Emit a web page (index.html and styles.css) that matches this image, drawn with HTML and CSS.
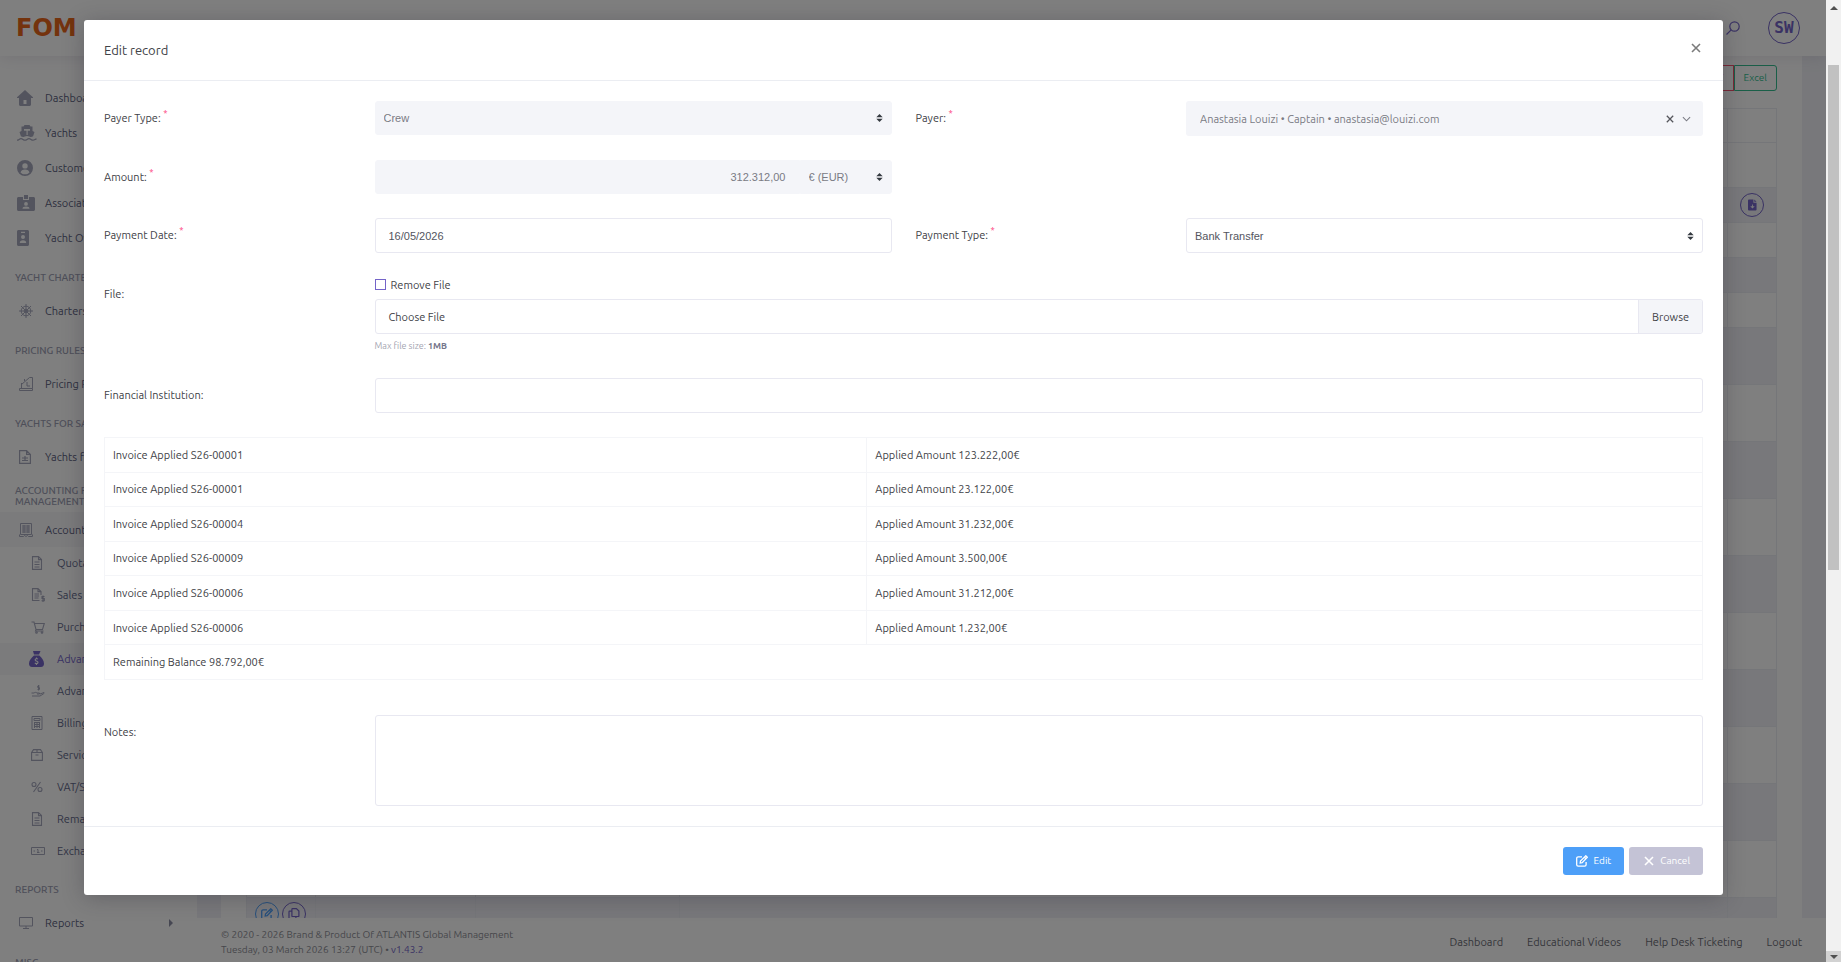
FILE: index.html
```html
<!DOCTYPE html>
<html lang="en">
<head>
    <meta charset="UTF-8">
    <meta name="viewport" content="width=device-width, initial-scale=1.0">
    <link rel="stylesheet" href="styles.css">

    <title>Edit record</title>
</head>
<body>
    <!-- icons -->
    <svg class="sprite" aria-hidden="true">
        <symbol id="i-home" viewBox="0 0 16 16"><path fill="currentColor" fill-rule="evenodd" d="M8 0 0 7.2V8h2v6.5c0 .8.7 1.5 1.5 1.5h9c.8 0 1.5-.7 1.5-1.500V8h2v-.8L14 5.400 8 0zM6.500 10h3v4h-3z"/></symbol>
        <symbol id="i-ship" viewBox="0 0 20 16"><path fill="currentColor" fill-rule="evenodd" d="M7.500 0h5l1 1.500h2V6l2 1-1.500 4.500c-1 0-1.500.5-2.500.5s-1.500-1-3.500-1-2.500 1-3.500 1-1.500-.5-2.500-.5L2.500 7l2-1V1.500h2zM7 4v1.800h2.500V10h1.200V5.800H13V4z"/><path fill="none" stroke="currentColor" stroke-width="1.300" d="M0 15.200c2 0 2.200-1.500 4-1.500s2.200 1.500 4 1.500 2.200-1.500 4-1.500 2.200 1.500 4 1.500 2-1.200 3.500-1.200"/></symbol>
        <symbol id="i-user" viewBox="0 0 16 16"><path fill="currentColor" fill-rule="evenodd" d="M8 0a8 8 0 1 0 0 16A8 8 0 0 0 8 0zm0 3.200a2.700 2.700 0 1 1 0 5.400 2.700 2.700 0 0 1 0-5.400zM3.500 12.500c.5-2 2-3 4.500-3s4 1 4.500 3C11.300 13.800 9.800 14.300 8 14.300s-3.300-.5-4.500-1.800z"/></symbol>
        <symbol id="i-badge" viewBox="0 0 18 16"><path fill="currentColor" fill-rule="evenodd" d="M7 0h4v4H7zM1.500 2H6v3h6V2h4.500c.8 0 1.500.7 1.500 1.500v11c0 .8-.7 1.500-1.500 1.500h-15C.7 16 0 15.300 0 14.500v-11C0 2.700.7 2 1.500 2zM9 7a1.900 1.900 0 1 0 0 3.800A1.900 1.900 0 0 0 9 7zm-3.500 6.800h7c0-1.500-1.200-2.300-3.500-2.300s-3.500.8-3.500 2.300z"/></symbol>
        <symbol id="i-card" viewBox="0 0 12 16"><path fill="currentColor" fill-rule="evenodd" d="M1.500 0h9c.8 0 1.500.7 1.500 1.500v13c0 .8-.7 1.500-1.500 1.500h-9C.7 16 0 15.300 0 14.500v-13C0 .7.700 0 1.500 0zM4 1.800v1.200h4V1.800zM6 5a2 2 0 1 0 0 4 2 2 0 0 0 0-4zm-3.200 8h6.400c0-1.800-1-2.700-3.200-2.700S2.800 11.200 2.800 13z"/></symbol>
        <symbol id="i-wheel" viewBox="0 0 14 14"><g fill="none" stroke="currentColor"><circle cx="7" cy="7" r="4.800"/><circle cx="7" cy="7" r="1.800"/><path d="M7 0v14M0 7h14M2 2l10 10M12 2 2 12"/></g></symbol>
        <symbol id="i-chart" viewBox="0 0 14 14"><path fill="none" stroke="currentColor" d="M.5 11.500h13v2H.5zM13.500 11.500V.5h-3l-8 7M2.500 11.500V6M5.500 4v-2M8 5v4h3"/></symbol>
        <symbol id="i-list" viewBox="0 0 12 14"><path fill="none" stroke="currentColor" stroke-width="1.200" d="M.6.6h7l3.800 3.800v9H.6zM7.600.6v3.800h3.800M3 8h6M3 10.500h6M6 6v5"/></symbol>
        <symbol id="i-book" viewBox="0 0 14 14"><path fill="none" stroke="currentColor" d="M1.500.5h11v11h-11zM.5 13.500h4l1-1 1.500 1 1.500-1 1 1h4M.5 11.500v2m13-2v2M3 3h8M3 5h8M3 7h8M3 9h8M5 2v8m4-8v8"/></symbol>
        <symbol id="i-file" viewBox="0 0 12 14"><path fill="none" stroke="currentColor" stroke-width="1.100" d="M1.500.6h6l3 3v9.800h-9zM7.500.6v3h3M3.500 6h5M3.500 8.500h5M3.500 11h5"/></symbol>
        <symbol id="i-sales" viewBox="0 0 14 14"><path fill="none" stroke="currentColor" stroke-width="1.100" d="M8.500 12.500h-7V.6h5.500l3 3V7M7 .6v3h3M3.500 6h4.500M3.500 8h4.500M3.500 10h4M13.500 8.500h-2.500v2h2.300v2.300H10.500M12 7.500v6.500"/></symbol>
        <symbol id="i-cart" viewBox="0 0 14 14"><g fill="none" stroke="currentColor" stroke-width="1.100"><path d="M.5 2h2.500l2 7.500h6.500L13.300 3.500H3.500M5 9.500 4.500 11h8"/><circle cx="5.500" cy="12.500" r=".8"/><circle cx="11" cy="12.500" r=".8"/></g></symbol>
        <symbol id="i-bag" viewBox="0 0 15 16"><path fill="currentColor" fill-rule="evenodd" d="M4 0h7.500L10 3.500H5zM5 4.500h5.300c2.500 2 4.700 5 4.700 8 0 2.200-1 3.500-3 3.500H3c-2 0-3-1.300-3-3.500 0-3 2.500-6 5-8zM7 6.500v.8c-1.500.3-2 2.300-.5 3l1.500.7c.8.500.2 1.100-.5 1.100-.600 0-1-.2-1.500-.5l-.4 1.200c.4.200.9.400 1.400.4v.8h1v-.8c1.700-.3 2.200-2.500.6-3.300L7 9.200c-.5-.4-.1-.9.500-.9.500 0 .900.1 1.300.3l.4-1.100L8 7.200v-.7z"/></symbol>
        <symbol id="i-hand" viewBox="0 0 14 14"><path fill="none" stroke="currentColor" d="M8.500 2H6.800v1.600h1.700v1.800H6.500M7.600 1v5.500M.5 9h2.500c1-.8 2-.8 3 0h2.500v1H6M9 10l4-1.500c.6.300 0 1-.5 1.300L9 12H1"/></symbol>
        <symbol id="i-calc" viewBox="0 0 12 14"><path fill="none" stroke="currentColor" d="M1 .5h10v13H1zM3 2.500h6v2H3zM3 6.500h6M3 8.500h6M3 10.500h6M3.500 6v6M6 6v6M8.500 6v6"/></symbol>
        <symbol id="i-box" viewBox="0 0 12 12"><path fill="none" stroke="currentColor" stroke-width="1.100" d="M.6 3.500h10.800v7.900H.6zM.6 3.500 2.500.6h7l1.900 2.900M6 .6v2.900M4.500 6h3"/></symbol>
        <symbol id="i-percent" viewBox="0 0 12 12"><g fill="none" stroke="currentColor" stroke-width="1.100"><circle cx="3" cy="3.500" r="2"/><circle cx="9" cy="8.500" r="2"/><path d="M9.500 1l-7 10"/></g></symbol>
        <symbol id="i-money" viewBox="0 0 14 10"><path fill="none" stroke="currentColor" d="M.5 1.500h13v7H.5zM6 3.500h1v3M6 6.500h2.500M2.500 5h1.500M10 5h1.500"/></symbol>
        <symbol id="i-screen" viewBox="0 0 14 12"><path fill="none" stroke="currentColor" d="M.5.5h13v8.500H.5zM4 11.500h6M7 9v2.500"/></symbol>
        <symbol id="i-search" viewBox="0 0 14 14"><g fill="none" stroke="currentColor" stroke-width="1.200"><circle cx="8.500" cy="5.500" r="4.700"/><path d="M5.200 8.800.5 13.500"/></g></symbol>
        <symbol id="i-edit" viewBox="0 0 12 12"><g fill="none" stroke="currentColor" stroke-width="1.300"><path d="M6 1.800H2.200C1.300 1.800.7 2.400.7 3.200v6.600c0 .8.6 1.400 1.500 1.400h6.500c.8 0 1.400-.6 1.400-1.400V7"/><path d="M4.200 8 4.500 6 9.800.8l1.500 1.500L6.200 7.600zM8.500 2.200 10 3.700"/></g></symbol>
        <symbol id="i-copy" viewBox="0 0 12 12"><path fill="none" stroke="currentColor" stroke-width="1.200" d="M4.500.6h3.900l2.500 2.500v4.800c0 .4-.2.600-.6.600H4.500c-.4 0-.6-.2-.6-.6V1.200c0-.4.200-.6.600-.6zM3.900 3.200H1.600c-.4 0-.6.200-.6.600v7c0 .4.200.6.600.6h5.700c.4 0 .6-.2.6-.6V8.500"/></symbol>
        <symbol id="i-download" viewBox="0 0 10 12"><path fill="currentColor" fill-rule="evenodd" d="M1 0h5v3.500h3.500V11c0 .6-.4 1-1 1H1c-.6 0-1-.4-1-1V1c0-.6.4-1 1-1zM7 0l2.500 2.500H7zM4.500 5.500v2h-2L5 10l2.500-2.500h-2v-2z"/></symbol>
        <symbol id="i-close" viewBox="0 0 10 10"><path fill="none" stroke="currentColor" stroke-width="1.600" d="M1 1l8 8M9 1 1 9"/></symbol>
        <symbol id="i-down" viewBox="0 0 10 6"><path fill="none" stroke="currentColor" stroke-width="1.200" d="M1 1l4 4 4-4"/></symbol>
    </svg>

    <div class="screen">
        <div class="page">
            <header class="topbar">
                <a href="#" class="logo">FOM</a>
                <div class="topbar-tools">
                    <button type="button" class="search" aria-label="Search"><svg><use href="#i-search"/></svg></button>
                    <a href="#" class="avatar">SW</a>
                </div>
            </header>

            <div class="layout">
                <!-- sidebar -->
                <nav class="sidebar">
                    <a href="#" class="item"><span class="icon"><svg width="16" height="16"><use href="#i-home"/></svg></span>Dashboard</a>
                    <a href="#" class="item"><span class="icon"><svg width="20" height="16"><use href="#i-ship"/></svg></span>Yachts</a>
                    <a href="#" class="item"><span class="icon"><svg width="16" height="16"><use href="#i-user"/></svg></span>Customers</a>
                    <a href="#" class="item"><span class="icon"><svg width="18" height="16"><use href="#i-badge"/></svg></span>Associates</a>
                    <a href="#" class="item"><span class="icon"><svg width="12" height="16"><use href="#i-card"/></svg></span>Yacht Owners</a>
                    <h4 class="section">Yacht Charter</h4>
                    <a href="#" class="item"><span class="icon line"><svg width="14" height="14"><use href="#i-wheel"/></svg></span>Charters</a>
                    <h4 class="section">Pricing Rules</h4>
                    <a href="#" class="item"><span class="icon line"><svg width="14" height="14"><use href="#i-chart"/></svg></span>Pricing Rules</a>
                    <h4 class="section">Yachts For Sale</h4>
                    <a href="#" class="item"><span class="icon line"><svg width="12" height="14"><use href="#i-list"/></svg></span>Yachts for Sale</a>
                    <h4 class="section">Accounting File<br>Management</h4>
                    <a href="#" class="item open"><span class="icon line"><svg width="14" height="14"><use href="#i-book"/></svg></span>Accounting</a>
                    <div class="submenu">
                        <a href="#" class="subitem"><span class="icon"><svg width="12" height="14"><use href="#i-file"/></svg></span>Quotations</a>
                        <a href="#" class="subitem"><span class="icon"><svg width="14" height="14"><use href="#i-sales"/></svg></span>Sales</a>
                        <a href="#" class="subitem"><span class="icon"><svg width="14" height="14"><use href="#i-cart"/></svg></span>Purchases</a>
                        <a href="#" class="subitem active"><span class="icon"><svg width="15" height="16"><use href="#i-bag"/></svg></span>Advances</a>
                        <a href="#" class="subitem"><span class="icon"><svg width="14" height="14"><use href="#i-hand"/></svg></span>Advances</a>
                        <a href="#" class="subitem"><span class="icon"><svg width="12" height="14"><use href="#i-calc"/></svg></span>Billing</a>
                        <a href="#" class="subitem"><span class="icon"><svg width="12" height="12"><use href="#i-box"/></svg></span>Services</a>
                        <a href="#" class="subitem"><span class="icon"><svg width="12" height="12"><use href="#i-percent"/></svg></span>VAT/Sales</a>
                        <a href="#" class="subitem"><span class="icon"><svg width="12" height="14"><use href="#i-file"/></svg></span>Remarks</a>
                        <a href="#" class="subitem"><span class="icon"><svg width="14" height="10"><use href="#i-money"/></svg></span>Exchange</a>
                    </div>
                    <h4 class="section">Reports</h4>
                    <a href="#" class="item"><span class="icon line"><svg width="14" height="12"><use href="#i-screen"/></svg></span>Reports<span class="caret"></span></a>
                    <h4 class="section">Misc</h4>
                </nav>

                <main class="main">
                    <div class="content">
                        <div class="card">
                            <div class="exports">
                                <button type="button" class="export pdf">PDF</button><button type="button" class="export excel">Excel</button>
                            </div>
                            <table class="records">
                                <colgroup><col class="c-actions"><col class="c-code"><col class="c-name"><col><col class="c-file"></colgroup>
                                <tbody>
                                    <tr class="head"><td></td><td></td><td></td><td></td><td></td></tr>
                                    <tr class="filters"><td></td><td></td><td></td><td></td><td></td></tr>
                                    <tr><td></td><td></td><td></td><td></td><td class="end"><button type="button" class="round" aria-label="Download"><svg width="9" height="12"><use href="#i-download"/></svg></button></td></tr>
                                    <tr><td></td><td></td><td></td><td></td><td></td></tr>
                                    <tr><td></td><td></td><td></td><td></td><td></td></tr>
                                    <tr><td></td><td></td><td></td><td></td><td></td></tr>
                                    <tr class="tall"><td></td><td></td><td></td><td></td><td></td></tr>
                                    <tr class="tall"><td></td><td></td><td></td><td></td><td></td></tr>
                                    <tr class="tall"><td></td><td></td><td></td><td></td><td></td></tr>
                                    <tr class="tall"><td></td><td></td><td></td><td></td><td></td></tr>
                                    <tr class="tall"><td></td><td></td><td></td><td></td><td></td></tr>
                                    <tr class="tall"><td></td><td></td><td></td><td></td><td></td></tr>
                                    <tr class="tall"><td></td><td></td><td></td><td></td><td></td></tr>
                                    <tr class="tall"><td></td><td></td><td></td><td></td><td></td></tr>
                                    <tr class="tall"><td></td><td></td><td></td><td></td><td></td></tr>
                                    <tr class="tall"><td></td><td></td><td></td><td></td><td></td></tr>
                                    <tr class="tall">
                                        <td class="actions">
                                            <div class="rounds">
                                                <button type="button" class="round blue" aria-label="Edit"><svg width="12" height="12"><use href="#i-edit"/></svg></button>
                                                <button type="button" class="round" aria-label="Copy"><svg width="12" height="12"><use href="#i-copy"/></svg></button>
                                            </div>
                                        </td><td></td><td></td><td></td><td></td>
                                    </tr>
                                </tbody>
                            </table>
                        </div>
                    </div>
                    <footer class="footer">
                        <p>&copy; 2020 - 2026 Brand &amp; Product Of ATLANTIS Global Management<br>Tuesday, 03 March 2026 13:27 (UTC) &bull; <a href="#" class="version">v1.43.2</a></p>
                        <div class="footer-links">
                            <a href="#">Dashboard</a>
                            <a href="#">Educational Videos</a>
                            <a href="#">Help Desk Ticketing</a>
                            <a href="#">Logout</a>
                        </div>
                    </footer>
                </main>
            </div>

            <!-- modal -->
            <div class="backdrop">
                <form class="modal" role="dialog" aria-labelledby="modal-title">
                    <div class="modal-header">
                        <h5 id="modal-title">Edit record</h5>
                        <button type="button" class="close" aria-label="Close"><svg width="10" height="10"><use href="#i-close"/></svg></button>
                    </div>

                    <div class="modal-body">
                        <div class="row">
                            <label for="payer-type">Payer Type: <sup>*</sup></label>
                            <div class="field"><select id="payer-type" class="control" disabled><option>Crew</option></select></div>
                            <label for="payer">Payer: <sup>*</sup></label>
                            <div class="field">
                                <div class="picker">
                                    <select id="payer" disabled><option>Anastasia Louizi • Captain • anastasia@louizi.com</option></select>
                                    <button type="button" aria-label="Clear"><svg width="8" height="8"><use href="#i-close"/></svg></button>
                                    <svg width="9" height="6"><use href="#i-down"/></svg>
                                </div>
                            </div>
                        </div>

                        <div class="row">
                            <label for="amount">Amount: <sup>*</sup></label>
                            <div class="field group">
                                <input type="text" id="amount" class="control amount" value="312.312,00" disabled>
                                <select class="control currency" aria-label="Currency" disabled><option>€ (EUR)</option></select>
                            </div>
                        </div>

                        <div class="row">
                            <label for="date">Payment Date: <sup>*</sup></label>
                            <div class="field"><input type="text" id="date" class="control" value="16/05/2026"></div>
                            <label for="payment-type">Payment Type: <sup>*</sup></label>
                            <div class="field"><select id="payment-type" class="control"><option>Bank Transfer</option></select></div>
                        </div>

                        <div class="row">
                            <label for="file">File:</label>
                            <div class="field wide">
                                <div class="check">
                                    <input type="checkbox" id="remove-file">
                                    <label for="remove-file">Remove File</label>
                                </div>
                                <div class="file">
                                    <input type="file" id="file">
                                    <span class="file-name">Choose File</span>
                                    <span class="file-browse">Browse</span>
                                </div>
                                <small class="hint">Max file size: <b>1MB</b></small>
                            </div>
                        </div>

                        <div class="row">
                            <label for="institution">Financial Institution:</label>
                            <div class="field wide"><input type="text" id="institution" class="control"></div>
                        </div>

                        <table class="invoices">
                            <tbody>
                                <tr><td class="first">Invoice Applied S26-00001</td><td>Applied Amount 123.222,00€</td></tr>
                                <tr><td>Invoice Applied S26-00001</td><td>Applied Amount 23.122,00€</td></tr>
                                <tr><td>Invoice Applied S26-00004</td><td>Applied Amount 31.232,00€</td></tr>
                                <tr><td>Invoice Applied S26-00009</td><td>Applied Amount 3.500,00€</td></tr>
                                <tr><td>Invoice Applied S26-00006</td><td>Applied Amount 31.212,00€</td></tr>
                                <tr><td>Invoice Applied S26-00006</td><td>Applied Amount 1.232,00€</td></tr>
                                <tr><td colspan="2">Remaining Balance 98.792,00€</td></tr>
                            </tbody>
                        </table>

                        <div class="row">
                            <label for="notes">Notes:</label>
                            <div class="field wide"><textarea id="notes" class="control"></textarea></div>
                        </div>
                    </div>

                    <div class="modal-footer">
                        <button type="submit" class="btn btn-edit"><svg width="12" height="12"><use href="#i-edit"/></svg>Edit</button>
                        <button type="button" class="btn btn-cancel"><svg width="10" height="10"><use href="#i-close"/></svg>Cancel</button>
                    </div>
                </form>
            </div>
        </div>

        <div class="scrollbar" aria-hidden="true">
            <span class="up"></span>
            <div class="track"><div class="thumb"></div></div>
            <span class="down"></span>
        </div>
    </div>
</body>
</html>
```
FILE: styles.css
```css
* {
    box-sizing: border-box;
}

body {
    margin: 0;
    font-family: Ubuntu, Lato, sans-serif;
    font-size: 11px;
    line-height: 18px;
    color: #414247;
}

a {
    color: inherit;
    text-decoration: none;
}

button {
    font: inherit;
    cursor: pointer;
}

svg {
    display: block;
    flex: none;
}

.sprite {
    display: none;
}

.screen {
    display: flex;
    height: 100vh;
    overflow: hidden;
}

.page {
    position: relative;
    flex: 1;
    display: flex;
    flex-direction: column;
    background: #fff;
    overflow: hidden;
}

/* top bar */
.topbar {
    display: flex;
    align-items: center;
    justify-content: space-between;
    flex: none;
    height: 56px;
    padding: 0 26px 0 16px;
    box-shadow: 0 0 16px rgba(82, 63, 105, 0.15);
    z-index: 1;
}

.logo {
    font-family: "DejaVu Sans", sans-serif;
    font-size: 24px;
    font-weight: bold;
    color: #e8661b;
}

.topbar-tools {
    display: flex;
    align-items: center;
    gap: 28px;
}

.search {
    padding: 0;
    border: 0;
    background: none;
    color: #7464c8;
}

.search svg {
    width: 14px;
    height: 14px;
}

.avatar {
    display: flex;
    align-items: center;
    justify-content: center;
    width: 32px;
    height: 32px;
    border: 1px solid #7464c8;
    border-radius: 50%;
    font-family: "DejaVu Sans Mono", monospace;
    font-size: 16px;
    font-weight: bold;
    color: #7464c8;
}

/* sidebar */
.layout {
    display: flex;
    flex: 1;
    min-height: 0;
}

.sidebar {
    flex: none;
    width: 197px;
    padding-top: 24px;
    overflow: hidden;
    white-space: nowrap;
    color: #5c5f7e;
}

.item,
.subitem {
    display: flex;
    align-items: center;
    height: 35px;
    padding-left: 17px;
}

.subitem {
    height: 32px;
    padding-left: 29px;
    color: #646a8c;
}

.item .icon,
.subitem .icon {
    width: 28px;
    color: #a6a8bd;
}

.item .line {
    padding-left: 2px;
}

.subitem .icon svg {
    margin-left: 2px;
}

.item.open,
.subitem.active {
    background: #f6f6f9;
}

.subitem.active,
.subitem.active .icon {
    color: #7464c8;
}

.subitem.active .icon svg {
    margin-left: 0;
}

.caret {
    margin-left: 85px;
    border: 4px solid transparent;
    border-left-color: #8d8fa5;
    border-right: 0;
}

.section {
    display: flex;
    align-items: center;
    height: 38px;
    margin: 0;
    padding: 6px 0 0 15px;
    font-size: 10px;
    font-weight: 500;
    line-height: 11px;
    text-transform: uppercase;
    color: #9c9eb3;
}

/* content */
.main {
    display: flex;
    flex: 1;
    flex-direction: column;
    min-width: 0;
    background: #f0f1f6;
}

.content {
    flex: 1;
    min-height: 0;
    padding: 0 24px;
    overflow: hidden;
}

.card {
    padding: 9px 25px;
    background: #fff;
}

.exports {
    display: flex;
    justify-content: flex-end;
    margin-bottom: 17px;
}

.export {
    height: 26px;
    padding: 0 9px;
    border: 1px solid #f4516c;
    background: none;
    font-size: 10px;
    color: #f4516c;
}

.export.excel {
    border-color: #34bf91;
    border-radius: 0 3px 3px 0;
    color: #34bf91;
}

.records {
    width: 100%;
    table-layout: fixed;
    border-collapse: collapse;
    border: 1px solid #ebedf2;
}

.records td {
    height: 35px;
    padding: 0;
    border: 1px solid #ebedf2;
}

.records tr:nth-child(odd) td {
    background: #f0f1f6;
}

.records tr.head td {
    height: 34px;
    background: #fff;
}

.records .filters td {
    height: 45px;
}

.records .tall td {
    height: 57px;
}

.records .actions {
    padding: 4px 8px;
    vertical-align: top;
}

.records .end {
    padding-left: 12px;
}

.c-actions {
    width: 69px;
}

.c-code {
    width: 160px;
}

.c-name {
    width: 204px;
}

.c-file {
    width: 49px;
}

.rounds {
    display: flex;
    gap: 3px;
}

.round {
    display: flex;
    align-items: center;
    justify-content: center;
    width: 24px;
    height: 24px;
    padding: 0;
    border: 1px solid #7464c8;
    border-radius: 50%;
    background: none;
    color: #7464c8;
}

.round.blue {
    border-color: #4d9ff8;
    color: #4d9ff8;
}

.footer {
    display: flex;
    align-items: center;
    justify-content: space-between;
    flex: none;
    height: 44px;
    padding: 4px 24px 0;
    background: #fff;
    line-height: 15px;
    color: #8d8e96;
}

.footer p {
    margin: 0;
    font-size: 10px;
}

.version {
    color: #7464c8;
}

.footer-links {
    display: flex;
    gap: 24px;
    color: #6c6d76;
}

/* modal */
.backdrop {
    position: absolute;
    top: 0;
    right: 0;
    bottom: 0;
    left: 0;
    padding: 20px 103px 0 84px;
    background: rgba(0, 0, 0, 0.5);
    z-index: 2;
}

.modal {
    background: #fff;
    border-radius: 3px;
    box-shadow: 0 3px 22px rgba(40, 36, 50, 0.3);
}

.modal-header {
    display: flex;
    align-items: center;
    justify-content: space-between;
    height: 61px;
    padding: 0 20px;
    border-bottom: 1px solid #ebedf2;
}

.modal-header h5 {
    margin: 0;
    font-size: 13px;
    font-weight: normal;
}

.close {
    margin-bottom: 4px;
    padding: 2px;
    border: 0;
    background: none;
    color: #7b7b7b;
}

.modal-body {
    display: flex;
    flex-direction: column;
    gap: 24px;
    padding: 20px;
}

.row {
    display: grid;
    grid-template-columns: repeat(6, 1fr);
    column-gap: 24px;
}

.row > label {
    padding-top: 8px;
}

sup {
    color: #fd397a;
    font-size: 9px;
    line-height: 0;
}

.field {
    grid-column: span 2;
    min-width: 0;
}

.field.wide {
    grid-column: span 5;
}

.control {
    display: block;
    width: 100%;
    height: 35px;
    margin: 0;
    padding: 0 13px;
    border: 1px solid #e8e8f1;
    border-radius: 3px;
    background-color: #fff;
    font-family: "Liberation Sans", Arial, sans-serif;
    font-size: 11px;
    color: #53555e;
}

.control:disabled {
    height: 34px;
    background-color: #f4f5f9;
    border-color: #f4f5f9;
    color: #7a7b84;
    opacity: 1;
}

select.control {
    appearance: none;
    padding: 0 28px 0 8px;
    background-image: url("data:image/svg+xml,%3Csvg xmlns='http://www.w3.org/2000/svg' viewBox='0 0 4 5'%3E%3Cpath fill='%23343a40' d='M2 0L0 2h4zm0 5L0 3h4z'/%3E%3C/svg%3E");
    background-repeat: no-repeat;
    background-position: right 8px center;
    background-size: 7px 8px;
}

textarea.control {
    height: 91px;
    padding: 8px 13px;
    resize: none;
}

.group {
    display: flex;
}

.amount {
    flex: 1;
    border-radius: 3px 0 0 3px;
    text-align: right;
}

select.currency {
    width: 92px;
    border-radius: 0 3px 3px 0;
}

.picker {
    display: flex;
    align-items: center;
    height: 35px;
    padding: 0 12px 0 14px;
    border-radius: 3px;
    background: #f4f5f9;
    color: #7a7b84;
}

.picker select {
    appearance: none;
    flex: 1;
    min-width: 0;
    padding: 0;
    border: 0;
    background: none;
    font: inherit;
    color: inherit;
    opacity: 1;
}

.picker button {
    padding: 0;
    margin-right: 8px;
    border: 0;
    background: none;
    color: #55565c;
}

.check {
    display: flex;
    align-items: center;
    gap: 5px;
    height: 22px;
    padding-bottom: 8px;
}

.check input {
    appearance: none;
    width: 11px;
    height: 11px;
    margin: 0;
    border: 1px solid #7464c8;
}

.check label {
    padding-top: 2px;
}

.file {
    position: relative;
    display: flex;
    height: 35px;
    border: 1px solid #e8e8f1;
    border-radius: 3px;
    line-height: 35px;
    overflow: hidden;
}

/* the native input covers the styled one */
.file input {
    position: absolute;
    width: 100%;
    height: 100%;
    opacity: 0;
}

.file-name {
    flex: 1;
    padding-left: 13px;
}

.file-browse {
    padding: 0 13px;
    border-left: 1px solid #e8e8f1;
    background: #f4f5f9;
}

.hint {
    display: block;
    padding-top: 4px;
    font-size: 9px;
    line-height: 16px;
    color: #a3a4b0;
}

.hint b {
    color: #74758a;
}

.invoices {
    width: 100%;
    height: 243px;
    margin-bottom: 11px;
    border-collapse: collapse;
}

.invoices td {
    padding: 0 8px;
    border: 1px solid #f4f5f8;
}

.invoices .first {
    width: 47.7%;
}

.modal-footer {
    display: flex;
    justify-content: flex-end;
    gap: 5px;
    padding: 20px;
    border-top: 1px solid #ebedf2;
}

.btn {
    display: flex;
    align-items: center;
    gap: 6px;
    height: 28px;
    padding: 0 13px;
    border: 0;
    border-radius: 3px;
    font-size: 10px;
    color: #fff;
}

.btn-edit {
    background: #4d9ff8;
}

.btn-cancel {
    padding-left: 15px;
    background: #c4c3d6;
}

/* window scrollbar */
.scrollbar {
    display: flex;
    flex-direction: column;
    flex: none;
    width: 15px;
    background: #f1f1f1;
}

.up,
.down {
    display: flex;
    align-items: center;
    justify-content: center;
    height: 15px;
}

.down {
    height: 11px;
    background: #d2d2d2;
}

.up::before,
.down::before {
    content: "";
    border: 4px solid transparent;
    border-top: 0;
    border-bottom-color: #505050;
}

.down::before {
    border-top: 4px solid #505050;
    border-bottom: 0;
}

.track {
    flex: 1;
    padding: 50px 2px 0;
}

.thumb {
    height: 57%;
    background: #c1c1c1;
}
```
